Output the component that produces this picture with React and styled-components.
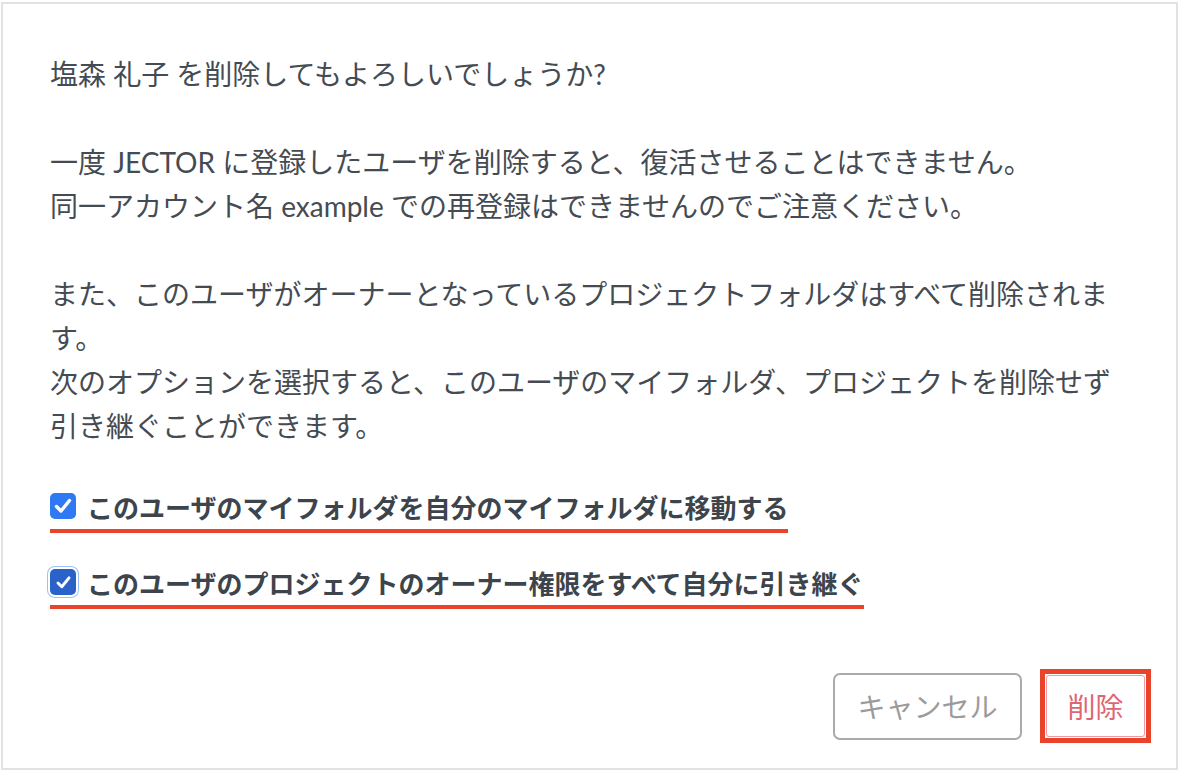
import React from 'react';
import styled, { createGlobalStyle } from 'styled-components';

const GlobalStyle = createGlobalStyle`
  html, body {
    margin: 0;
    padding: 0;
    background: #ffffff;
  }
  body {
    font-family: Lato, "Noto Sans CJK JP", sans-serif;
  }
`

const Panel = styled.div`
  box-sizing: border-box;
  width: 1177px;
  height: 768px;
  margin: 2px 0 0 1px;
  border: 2px solid #e2e2e2;
  display: flex;
  flex-direction: column;
  padding: 48px 25px 25px 47px;
`

const Message = styled.div`
  font-size: 28px;
  line-height: 44px;
  color: #454b52;
  padding-right: 25px;
`

const Para = styled.p`
  margin: 0;
  & + & {
    margin-top: 44px;
  }
`

const Options = styled.div`
  display: flex;
  flex-direction: column;
  align-items: flex-start;
  gap: 26px;
  margin-top: 35px;
`

const Option = styled.label`
  display: inline-flex;
  align-items: center;
  gap: 11px;
  height: 46px;
  border-bottom: 4px solid #e9432b;
  font-size: 26px;
  font-weight: 700;
  color: #3d444c;
  cursor: pointer;
`

const Box = styled.span`
  display: inline-flex;
  align-items: center;
  justify-content: center;
  box-sizing: border-box;
  width: 26px;
  height: 26px;
  border-radius: 5px;
  background: ${props => props.focused ? '#2b62c9' : '#3079f5'};
  ${props => props.focused && `
    box-shadow: 0 0 0 2px #ffffff, 0 0 0 3px #9cc2f7;
  `}
`

const Footer = styled.div`
  margin-top: auto;
  display: flex;
  justify-content: flex-end;
  align-items: center;
  gap: 18px;
`

const CancelButton = styled.button`
  box-sizing: border-box;
  width: 189px;
  height: 67px;
  border: 2px solid #aaaaaa;
  border-radius: 7px;
  background: #ffffff;
  color: #9b9b9b;
  font-family: Lato, "Noto Sans CJK JP", sans-serif;
  font-size: 28px;
`

const Highlight = styled.div`
  box-sizing: border-box;
  width: 111px;
  height: 74px;
  border: 5px solid #e9432b;
  padding: 1px;
  display: flex;
`

const DeleteButton = styled.button`
  flex: 1;
  border: 1px solid #ef9aa2;
  border-radius: 3px;
  background: #ffffff;
  color: #de6573;
  font-family: Lato, "Noto Sans CJK JP", sans-serif;
  font-size: 28px;
  padding: 0;
`

const Check = ({ size }) => (
  <svg width={size} height={size} viewBox="0 0 20 20">
    <path d="M3.5 10.5 L8 15 L16.5 4.5" fill="none" stroke="#ffffff" strokeWidth="3.4" strokeLinecap="round" strokeLinejoin="round" />
  </svg>
)

const CheckOption = ({ label, focused }) => (
  <Option>
    <Box focused={focused}><Check size={focused ? 17 : 20} /></Box>
    {label}
  </Option>
)

const App = () => {
  return (
    <Panel>
      <GlobalStyle />
      <Message>
        <Para>塩森 礼子 を削除してもよろしいでしょうか?</Para>
        <Para>
          一度 JECTOR に登録したユーザを削除すると、復活させることはできません。<br />
          同一アカウント名 example での再登録はできませんのでご注意ください。
        </Para>
        <Para>
          また、このユーザがオーナーとなっているプロジェクトフォルダはすべて削除されます。<br />
          次のオプションを選択すると、このユーザのマイフォルダ、プロジェクトを削除せず引き継ぐことができます。
        </Para>
      </Message>
      <Options>
        <CheckOption label="このユーザのマイフォルダを自分のマイフォルダに移動する" />
        <CheckOption label="このユーザのプロジェクトのオーナー権限をすべて自分に引き継ぐ" focused />
      </Options>
      <Footer>
        <CancelButton>キャンセル</CancelButton>
        <Highlight>
          <DeleteButton>削除</DeleteButton>
        </Highlight>
      </Footer>
    </Panel>
  )
}

export default App;
